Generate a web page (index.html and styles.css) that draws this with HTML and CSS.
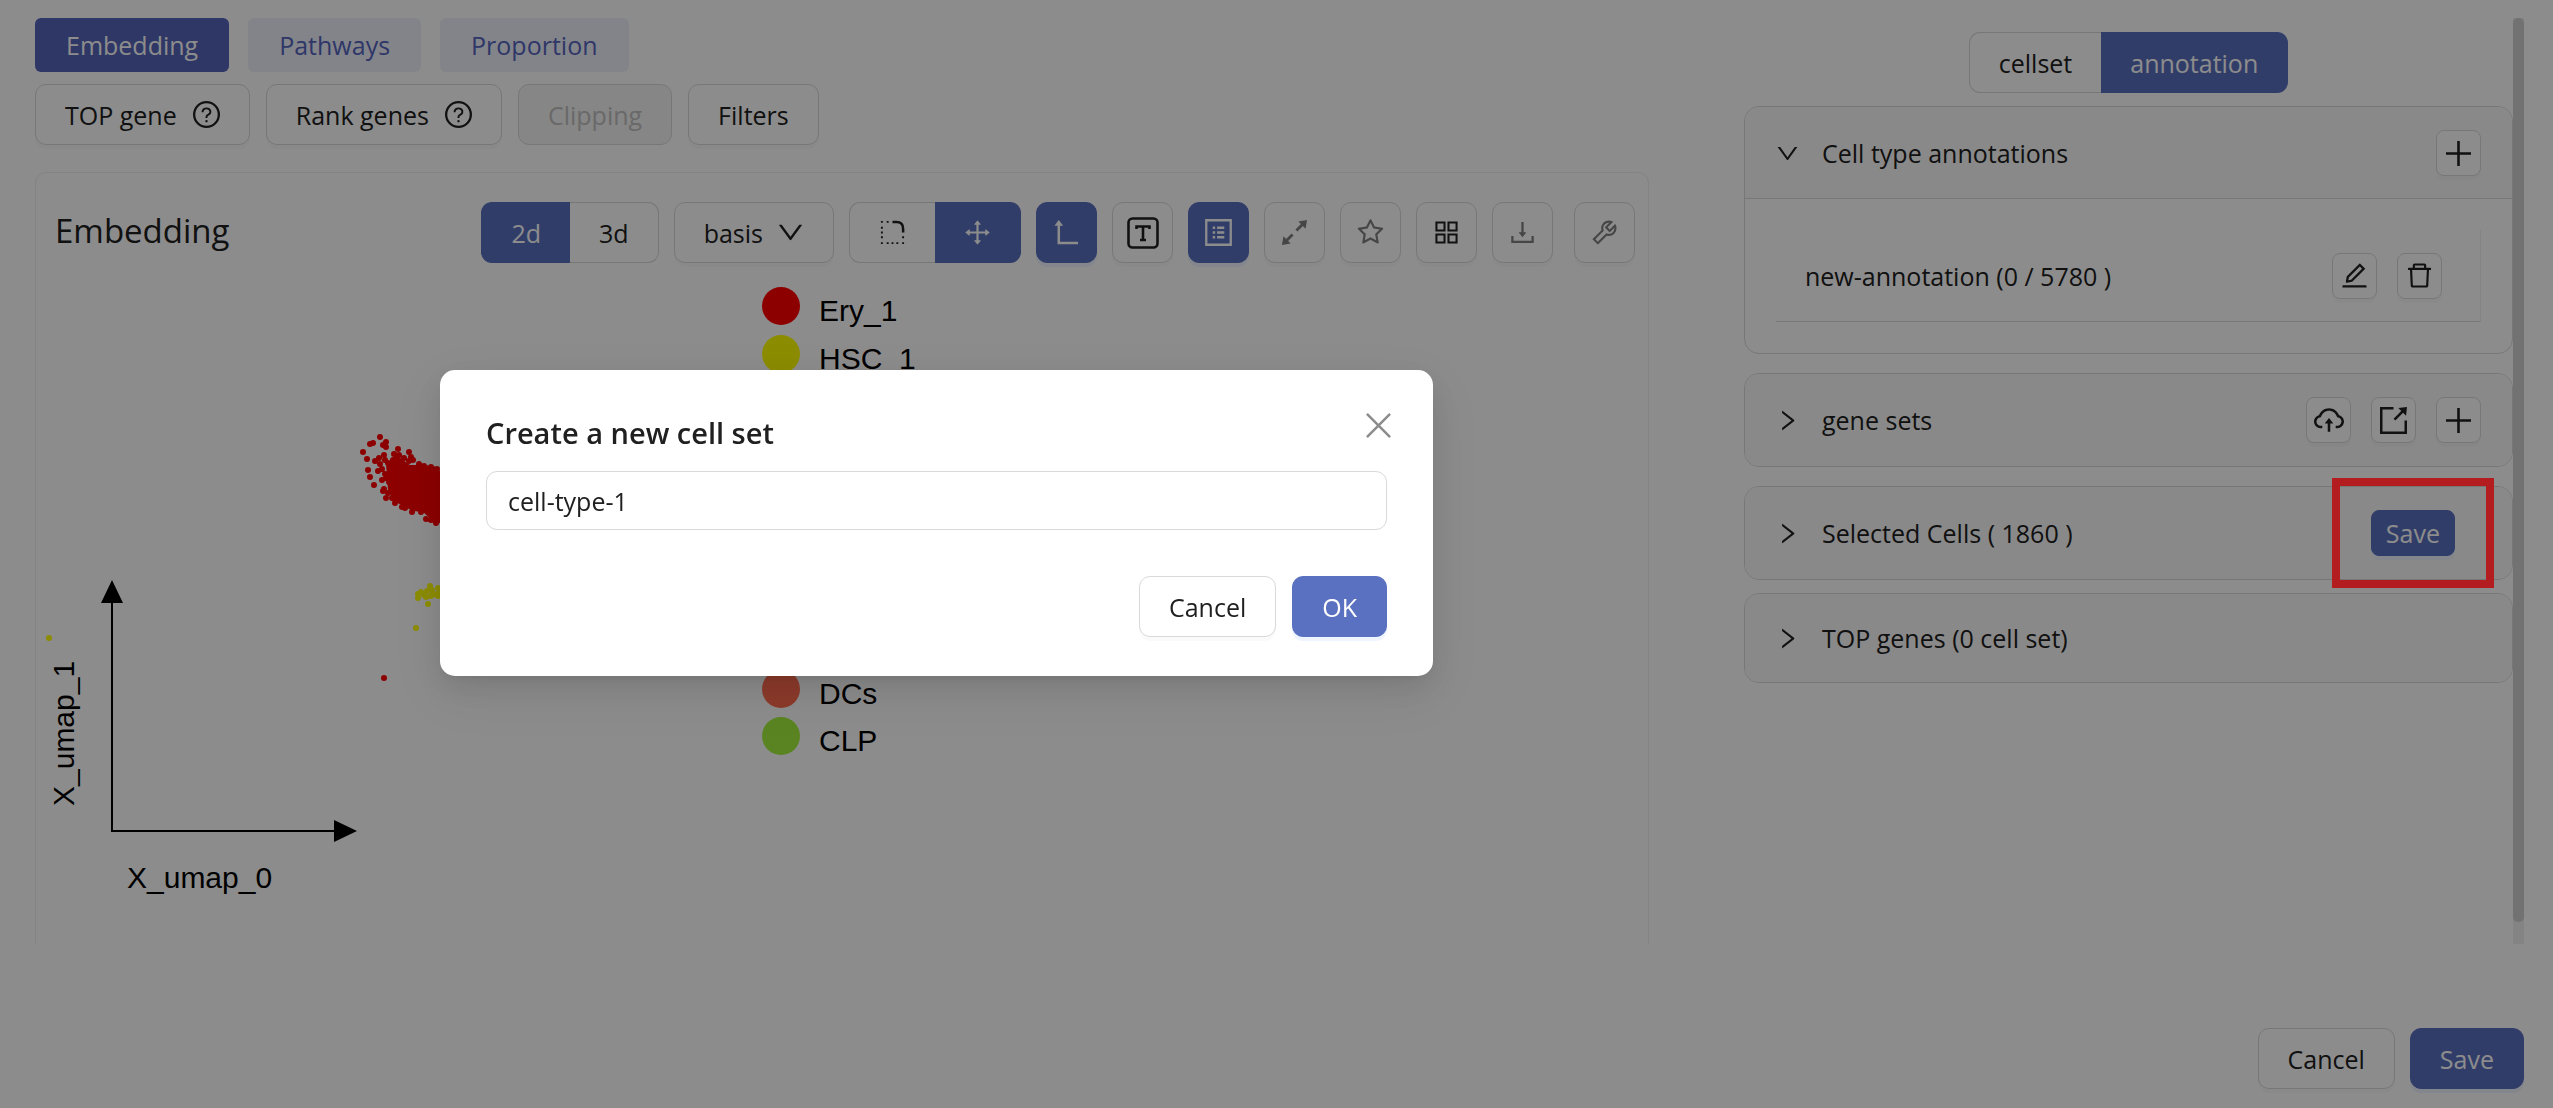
FILE: index.html
```html
<!DOCTYPE html>
<html lang="en">
<head>
<meta charset="utf-8">
<title>Embedding</title>
<link rel="stylesheet" href="styles.css">
</head>
<body>
<svg class="sprite" aria-hidden="true">
  <symbol id="down" viewBox="64 64 896 896"><path d="M884 256h-75c-5.1 0-9.900 2.500-12.900 6.600L512 654.200 227.900 262.600c-3-4.100-7.800-6.600-12.900-6.600h-75c-6.500 0-10.300 7.400-6.500 12.700l352.600 486.100c12.800 17.600 39 17.600 51.700 0l352.600-486.100c3.900-5.300.1-12.700-6.400-12.700z"/></symbol>
  <symbol id="right" viewBox="64 64 896 896"><path d="M765.700 486.800L314.900 134.700A7.970 7.970 0 00302 141v77.300c0 4.900 2.300 9.600 6.100 12.600l360 281.100-360 281.100c-3.900 3-6.100 7.700-6.100 12.600V883c0 6.700 7.700 10.400 12.900 6.300l450.800-352.100a31.960 31.960 0 000-50.400z"/></symbol>
  <symbol id="question" viewBox="64 64 896 896"><circle cx="512" cy="512" r="410" fill="none" stroke="currentColor" stroke-width="76"/><path d="M623.600 316.700C593.600 290.400 554 276 512 276s-81.600 14.500-111.600 40.700C369.200 344 352 380.700 352 420v7.600c0 4.400 3.600 8 8 8h48c4.400 0 8-3.600 8-8V420c0-44.100 43.100-80 96-80s96 35.900 96 80c0 31.100-22 59.600-56.100 72.700-21.200 8.100-39.200 22.300-52.100 40.900-13.100 19-19.900 41.800-19.900 64.900V620c0 4.400 3.600 8 8 8h48c4.400 0 8-3.600 8-8v-22.700a48.300 48.300 0 0130.900-44.800c59-22.700 97.100-74.700 97.100-132.500.1-39.300-17.100-76-48.300-103.300zM472 732a40 40 0 1080 0 40 40 0 10-80 0z"/></symbol>
  <symbol id="edit" viewBox="64 64 896 896"><path d="M257.700 752c2 0 4-.2 6-.5L431.900 722c2-.4 3.900-1.300 5.300-2.800l423.900-423.900a9.960 9.960 0 000-14.100L694.900 114.900c-1.900-1.900-4.400-2.900-7.100-2.900s-5.200 1-7.100 2.900L256.800 538.800c-1.500 1.500-2.400 3.300-2.800 5.300l-29.500 168.200a33.500 33.500 0 009.400 29.800c6.600 6.400 14.900 9.900 23.800 9.900zm67.400-174.400L687.800 215l73.300 73.300-362.700 362.600-88.900 15.700 15.600-89zM880 836H144c-17.700 0-32 14.300-32 32v36c0 4.400 3.600 8 8 8h784c4.400 0 8-3.600 8-8v-36c0-17.700-14.300-32-32-32z"/></symbol>
  <symbol id="trash" viewBox="64 64 896 896"><path d="M360 184h304v72h72v-80c0-35.300-28.700-64-64-64H352c-35.300 0-64 28.700-64 64v80h72v-72zm504 72H160c-17.700 0-32 14.300-32 32v32c0 4.400 3.600 8 8 8h60.400l24.700 523c1.600 34.100 29.800 61 63.900 61h454c34.200 0 62.300-26.800 63.900-61l24.700-523H888c4.400 0 8-3.600 8-8v-32c0-17.700-14.300-32-32-32zM731.300 840H292.700l-24.200-512h487l-24.200 512z"/></symbol>
  <symbol id="drag" viewBox="64 64 896 896"><path d="M909.300 506.300L781.700 405.600a7.230 7.230 0 00-11.700 5.700V476H548V254h64.800c6 0 9.400-7 5.700-11.700L517.700 114.700a7.140 7.140 0 00-11.300 0L405.600 242.300a7.230 7.230 0 005.700 11.700H476v222H254v-64.800c0-6-7-9.400-11.700-5.700L114.700 506.300a7.140 7.140 0 000 11.300l127.500 100.800c4.700 3.700 11.700.4 11.700-5.700V548h222v222h-64.800c-6 0-9.400 7-5.700 11.700l100.800 127.500c2.900 3.700 8.500 3.700 11.300 0l100.800-127.500c3.700-4.700.4-11.700-5.700-11.700H548V548h222v64.800c0 6 7 9.400 11.700 5.700l127.500-100.800a7.300 7.300 0 00.1-11.400z"/></symbol>
  <symbol id="star" viewBox="64 64 896 896"><path d="M908.100 353.100l-253.900-36.900L540.700 86.100c-3.100-6.300-8.200-11.400-14.500-14.500-15.800-7.800-35-1.300-42.900 14.500L369.800 316.200l-253.900 36.900c-7 1-13.400 4.300-18.300 9.300a32.050 32.050 0 00.6 45.300l183.700 179.100-43.400 252.900a31.950 31.950 0 0046.400 33.700L512 754l227.100 119.400c6.200 3.300 13.400 4.400 20.300 3.200 17.400-3 29.100-19.500 26.100-36.900l-43.400-252.900 183.700-179.100c5-4.900 8.300-11.300 9.300-18.300 2.700-17.500-9.500-33.700-27-36.300zM664.800 561.600l36.100 210.300L512 672.700 323.100 772l36.100-210.300-152.800-149L417.600 382 512 190.700 606.400 382l211.200 30.700-152.800 148.900z"/></symbol>
  <symbol id="grid" viewBox="64 64 896 896"><path d="M178 178h268v268H178zM578 178h268v268H578zM178 578h268v268H178zM578 578h268v268H578z" fill="none" stroke="currentColor" stroke-width="68"/></symbol>
  <symbol id="download" viewBox="64 64 896 896"><path d="M505.700 661a8 8 0 0012.600 0l112-141.700c4.100-5.200.4-12.900-6.300-12.900h-74.100V168c0-4.400-3.600-8-8-8h-60c-4.400 0-8 3.600-8 8v338.300H400c-6.700 0-10.400 7.700-6.300 12.900l112 141.800zM878 626h-60c-4.400 0-8 3.600-8 8v154H214V634c0-4.400-3.600-8-8-8h-60c-4.400 0-8 3.600-8 8v198c0 17.700 14.300 32 32 32h684c17.700 0 32-14.300 32-32V634c0-4.400-3.600-8-8-8z"/></symbol>
  <symbol id="tool" viewBox="64 64 896 896"><path d="M876.600 239.500c-.5-.9-1.200-1.800-2-2.500-5-5-13.100-5-18.100 0L684.200 409.300l-67.900-67.900L788.700 169c.8-.8 1.400-1.600 2-2.500 3.600-6.100 1.600-13.900-4.500-17.500-98.200-58-226.800-44.700-311.300 39.700-67 67-89.200 162-66.500 247.400l-293 293c-3 3-2.800 7.900.3 11l169.700 169.700c3.100 3.100 8.100 3.300 11 .3l292.900-292.900c85.500 22.800 180.500.7 247.600-66.400 84.400-84.500 97.700-213.100 39.700-311.300zM786 499.800c-58.100 58.100-145.300 69.300-214.600 33.600l-8.800 8.800-.1-.1-274 274.100-79.200-79.200 230.100-230.100s0 .1.1.1l52.800-52.800c-35.700-69.300-24.500-156.500 33.600-214.600a184.200 184.200 0 01144-53.500L537 318.900a32.050 32.050 0 000 45.300l124.500 124.500a32.050 32.050 0 0045.300 0l132.800-132.800c3.700 51.800-14.400 104.800-53.600 143.900z"/></symbol>
  <symbol id="cloud" viewBox="64 64 896 896"><path d="M518.300 459a8 8 0 00-12.600 0l-112 141.700a7.980 7.980 0 006.300 12.900h73.900V856c0 4.400 3.600 8 8 8h60c4.400 0 8-3.600 8-8V613.700H624c6.700 0 10.400-7.700 6.300-12.900L518.300 459z"/><path d="M811.400 366.700C765.600 245.900 648.900 160 512.200 160S258.800 245.800 213 366.600C127.300 389.100 64 467.200 64 560c0 110.500 89.500 200 199.900 200H304c4.400 0 8-3.600 8-8v-60c0-4.400-3.600-8-8-8h-40.100c-33.700 0-65.400-13.400-89-37.700-23.500-24.200-36-56.800-34.900-90.600.9-26.400 9.900-51.200 26.200-72.100 16.700-21.300 40.100-36.800 66.100-43.700l37.900-9.900 13.900-36.600c8.600-22.800 20.600-44.100 35.700-63.400a245.600 245.600 0 0152.400-49.900c41.100-28.900 89.500-44.200 140-44.200s98.900 15.300 140 44.200c19.900 14 37.500 30.800 52.400 49.900 15.100 19.300 27.100 40.700 35.700 63.400l13.800 36.500 37.800 10C846.100 454.500 884 503.800 884 560c0 33.100-12.900 64.300-36.300 87.700a123.070 123.070 0 01-87.600 36.300H720c-4.400 0-8 3.600-8 8v60c0 4.400 3.600 8 8 8h40.100C870.500 760 960 670.500 960 560c0-92.700-63.100-170.700-148.600-193.300z"/></symbol>
  <symbol id="plus" viewBox="0 0 27 27"><path d="M13.500 1v25M1 13.500h25" fill="none" stroke="currentColor" stroke-width="2.600"/></symbol>
  <symbol id="close" viewBox="0 0 28 28"><path d="M2 2l24 24M26 2L2 26" fill="none" stroke="currentColor" stroke-width="2.600"/></symbol>
  <symbol id="export" viewBox="0 0 28 28"><path d="M14 1.300H1.300v25.400h25.400V14" fill="none" stroke="currentColor" stroke-width="2.600"/><path d="M15 13L24 4" fill="none" stroke="currentColor" stroke-width="2.600"/><path d="M19 1l9-1-1 9z"/></symbol>
  <symbol id="corner" viewBox="0 0 28 28"><path d="M14 3h4q7 0 7 7v4" fill="none" stroke="currentColor" stroke-width="2.600"/><path d="M2 2h2v2H2zM8 2h2v2H8zM2 8h2v2H2zM2 13h2v2H2zM2 18h2v2H2zM2 24h2v2H2zM8 24h2v2H8zM13 24h2v2h-2zM18 24h2v2h-2zM24 24h2v2h-2zM24 18h2v2h-2z"/></symbol>
  <symbol id="axis" viewBox="0 0 28 28"><path d="M6 5v20h20" fill="none" stroke="currentColor" stroke-width="2.600"/><path d="M6 1l4.500 6h-9z"/></symbol>
  <symbol id="text" viewBox="0 0 32 32"><rect x="1.500" y="1.500" width="29" height="29" rx="4" fill="none" stroke="currentColor" stroke-width="2.600"/><path d="M9.500 12V9.500h13V12M16 9.500V23M13 23h6" fill="none" stroke="currentColor" stroke-width="2.600"/></symbol>
  <symbol id="list" viewBox="0 0 28 28"><path d="M1.300 1.300h25.400v25.400H1.300z" fill="none" stroke="currentColor" stroke-width="2.400"/><path d="M8 9h2.500M8 14h2.500M8 19h2.500M12.500 9h7.500M12.500 14h7.500M12.500 19h7.500" fill="none" stroke="currentColor" stroke-width="2.600"/></symbol>
  <symbol id="expand" viewBox="0 0 28 28"><path d="M16 12l7-7M12 16l-7 7" fill="none" stroke="currentColor" stroke-width="3"/><path d="M18 2.500l9-1.500-1.500 9zM10 25.500L1 27l1.500-9z"/></symbol>
</svg>

<main class="workspace">
  <section class="left">
    <nav class="tabs">
      <button class="tab active">Embedding</button>
      <button class="tab">Pathways</button>
      <button class="tab">Proportion</button>
    </nav>
    <div class="actions">
      <button class="btn">TOP gene <svg class="icon"><use href="#question"/></svg></button>
      <button class="btn">Rank genes <svg class="icon"><use href="#question"/></svg></button>
      <button class="btn" disabled>Clipping</button>
      <button class="btn">Filters</button>
    </div>
    <section class="card">
      <header class="card-head">
        <h2>Embedding</h2>
        <div class="toolbar">
          <div class="group"><button class="btn primary">2d</button><button class="btn">3d</button></div>
          <button class="btn">basis <svg class="icon"><use href="#down"/></svg></button>
          <div class="group"><button class="btn" aria-label="Lasso"><svg class="icon"><use href="#corner"/></svg></button><button class="btn primary" aria-label="Move"><svg class="icon"><use href="#drag"/></svg></button></div>
          <button class="btn square primary" aria-label="Axis"><svg class="icon"><use href="#axis"/></svg></button>
          <button class="btn square" aria-label="Labels"><svg class="icon large"><use href="#text"/></svg></button>
          <button class="btn square primary" aria-label="Legend"><svg class="icon"><use href="#list"/></svg></button>
          <button class="btn square muted" aria-label="Expand"><svg class="icon"><use href="#expand"/></svg></button>
          <button class="btn square muted" aria-label="Favourite"><svg class="icon"><use href="#star"/></svg></button>
          <button class="btn square" aria-label="Layout"><svg class="icon"><use href="#grid"/></svg></button>
          <button class="btn square muted" aria-label="Download"><svg class="icon"><use href="#download"/></svg></button>
          <button class="btn square muted settings" aria-label="Settings"><svg class="icon"><use href="#tool"/></svg></button>
        </div>
      </header>
      <svg class="plot" viewBox="36 283 1612 661" preserveAspectRatio="xMinYMin meet">
        <g class="legend">
          <circle cx="781" cy="306" r="19" fill="#f00"/><text x="819" y="321">Ery_1</text>
          <circle cx="781" cy="354" r="19" fill="#ff0"/><text x="819" y="369">HSC_1</text>
          <circle cx="781" cy="689" r="19" fill="#ff6a4d"/><text x="819" y="704">DCs</text>
          <circle cx="781" cy="736" r="19" fill="#a4f03c"/><text x="819" y="751">CLP</text>
        </g>
        <g class="axes">
          <path d="M112 598V831H340" fill="none" stroke="#000" stroke-width="2"/>
          <path d="M112 580l11 23h-22zM357 831l-23-11v22z"/>
          <text x="127" y="888">X_umap_0</text>
          <text transform="translate(74 806) rotate(-90)">X_umap_1</text>
        </g>
        <path class="area" d="M386 464L396 455 410 465 424 465 434 466 442 473V524L433 521 423 512 413 511 403 506 394 501 388 490z"/>
        <path class="dots red" d="M380 437h0M370 444h0M373 443h0M383 445h0M386 442h0M386 447h0M363 452h0M367 459h0M368 470h0M370 477h0M374 485h0M398 449h0M394 454h0M399 455h0M409 452h0M411 457h0M409 461h0M413 460h0M375 461h0M379 458h0M384 455h0M385 460h0M380 464h0M388 463h0M378 471h0M382 469h0M385 474h0M382 480h0M386 478h0M389 482h0M383 491h0M384 489h0M388 493h0M386 498h0M392 498h0M395 503h0M402 507h0M405 508h0M412 512h0M421 512h0M426 519h0M431 520h0M436 523h0M404 458h0M419 464h0M424 466h0M431 467h0M437 469h0M390 470h0M393 460h0M401 463h0M384 678h0"/>
        <path class="dots yellow" d="M418 598h0M418 594h0M421 592h0M424 595h0M427 591h0M430 586h0M431 596h0M434 594h0M432 590h0M438 588h0M438 596h0M426 597h0M439 593h0M428 604h0M416 628h0M49 638h0"/>
      </svg>
    </section>
  </section>

  <aside class="right">
    <div class="group switch"><button class="btn">cellset</button><button class="btn primary">annotation</button></div>
    <section class="panel">
      <header class="panel-head open"><svg class="chevron"><use href="#down"/></svg><h3>Cell type annotations</h3><button class="btn small" aria-label="Add annotation"><svg class="icon"><use href="#plus"/></svg></button></header>
      <div class="panel-body">
        <div class="entry"><span>new-annotation (0 / 5780 )</span><button class="btn small" aria-label="Edit"><svg class="icon"><use href="#edit"/></svg></button><button class="btn small" aria-label="Delete"><svg class="icon"><use href="#trash"/></svg></button></div>
      </div>
    </section>
    <section class="panel"><header class="panel-head"><svg class="chevron"><use href="#right"/></svg><h3>gene sets</h3><button class="btn small" aria-label="Upload"><svg class="icon cloud"><use href="#cloud"/></svg></button><button class="btn small" aria-label="Export"><svg class="icon"><use href="#export"/></svg></button><button class="btn small" aria-label="Add gene set"><svg class="icon"><use href="#plus"/></svg></button></header></section>
    <section class="panel selected"><header class="panel-head"><svg class="chevron"><use href="#right"/></svg><h3>Selected Cells ( 1860 )</h3><button class="btn save primary">Save</button></header><div class="highlight"></div></section>
    <section class="panel"><header class="panel-head"><svg class="chevron"><use href="#right"/></svg><h3>TOP genes (0 cell set)</h3></header></section>
  </aside>
  <div class="scrollbar"><div class="thumb"></div></div>
</main>

<footer class="footer"><button class="btn">Cancel</button><button class="btn primary">Save</button></footer>

<div class="mask">
  <form class="modal" role="dialog" aria-labelledby="dialog-title">
    <header class="modal-head"><label id="dialog-title" for="set-name">Create a new cell set</label><button type="button" class="close" aria-label="Close"><svg class="icon"><use href="#close"/></svg></button></header>
    <input id="set-name" type="text" value="cell-type-1">
    <div class="modal-foot"><button type="button" class="btn">Cancel</button><button type="button" class="btn primary">OK</button></div>
  </form>
</div>
</body>
</html>
```
FILE: styles.css
```css
* { box-sizing: border-box; }
body {
  margin: 0;
  min-height: 100vh;
  padding: 18px 29px 19px 35px;
  display: flex;
  flex-direction: column;
  justify-content: space-between;
  background: #fff;
  color: #202020;
  font: 25px/36px "Segoe UI", "Open Sans", "Noto Sans", sans-serif;
}
h2, h3 { margin: 0; font-weight: 400; }
h2 { font-size: 33px; }
h3 { font-size: 25px; }
svg { display: block; fill: currentColor; }
.sprite { position: absolute; width: 0; height: 0; }
.icon { width: 27px; height: 27px; flex: none; }
.icon.large { width: 32px; height: 32px; }
.icon.cloud { width: 30px; height: 30px; }

.btn {
  height: 61px;
  padding: 0 29px;
  display: inline-flex;
  align-items: center;
  justify-content: center;
  gap: 14px;
  border: 1px solid #d9d9d9;
  border-radius: 11px;
  background: #fff;
  box-shadow: 0 4px 0 rgba(0, 0, 0, .02);
  color: inherit;
  font: inherit;
  white-space: nowrap;
}
.btn:disabled { background: #f5f5f5; color: #bfbfbf; box-shadow: none; }
.btn.primary { border-color: #5a70c0; background: #5a70c0; color: #fff; box-shadow: 0 4px 0 #eff5ff; }
.btn.square { width: 61px; padding: 0; }
.btn.small { width: 45px; height: 46px; padding: 0; border-radius: 8px; }
.btn.muted { color: #808080; }
.group { display: flex; }
.group .btn { box-shadow: none; }
.group .btn:first-child { border-radius: 11px 0 0 11px; border-right: 0; }
.group .btn:last-child { border-radius: 0 11px 11px 0; border-left: 0; }

.workspace {
  height: calc(100vh - 182px);
  display: grid;
  grid-template-columns: minmax(0, 1614fr) minmax(0, 864fr) 11px;
}
.left { display: flex; flex-direction: column; min-height: 0; }
.tabs { display: flex; gap: 19px; }
.tab {
  height: 54px;
  padding: 0 31px;
  border: 0;
  border-radius: 6px;
  background: #eff1fc;
  color: #5565bd;
  font: inherit;
}
.tab.active { background: #5564b9; color: #fff; }
.actions { display: flex; gap: 16px; margin-top: 12px; }
.actions .btn { gap: 16px; }
.card {
  flex: 1;
  min-height: 0;
  margin-top: 27px;
  overflow: hidden;
  border: 1px solid #f0f0f0;
  border-bottom: 0;
  border-radius: 11px 11px 0 0;
}
.card-head { display: flex; justify-content: space-between; align-items: center; padding: 29px 13px 20px 19px; }
.card-head h2 { padding-bottom: 4px; }
.toolbar { display: flex; gap: 15px; }
.settings { margin-left: 6px; }
.plot { width: 100%; height: auto; }
.plot text { fill: #000; font-family: "Liberation Sans", Arial, sans-serif; font-size: 30px; }
.axes { fill: #000; }
.area { fill: #f00; }
.dots { fill: none; stroke-width: 6; stroke-linecap: round; }
.dots.red { stroke: #f00; }
.dots.yellow { stroke: #ff0; }

.right { padding: 14px 0 0 95px; display: flex; flex-direction: column; }
.switch { justify-content: center; margin-bottom: 13px; }
.panel { margin-bottom: 19px; border: 1px solid #d9d9d9; border-radius: 15px; overflow: hidden; }
.panel-head { display: flex; align-items: center; gap: 20px; min-height: 88px; padding: 23px 31px; background: #fafafa; }
.panel-head.open { padding-bottom: 22px; border-bottom: 1px solid #d9d9d9; }
.panel-head h3 { flex: 1; }
.chevron { width: 23px; height: 23px; margin-right: 3px; flex: none; }
.panel-body { padding: 31px; }
.entry { display: flex; align-items: center; gap: 20px; height: 92px; padding: 0 38px 0 29px; border-bottom: 1px solid #d9d9d9; border-right: 1px solid #f0f0f0; }
.entry span { flex: 1; }
.selected { position: relative; overflow: visible; margin-bottom: 13px; }
.selected .panel-head { border-radius: 14px; padding-right: 57px; }
.btn.save { height: 46px; padding: 0 14px; border-radius: 8px; }
.highlight { position: absolute; z-index: 20; top: -9px; right: 18px; width: 162px; height: 110px; border: 8px solid #b41d20; }
.scrollbar { background: #f1f1f1; }
.thumb { height: calc(100% - 22px); border-radius: 5px; background: #d0d0d0; }

.footer { display: flex; justify-content: flex-end; gap: 15px; }

.mask { position: fixed; inset: 0; z-index: 10; padding: 370px 0 0 440px; background: rgba(0, 0, 0, .45); }
.modal {
  width: 993px;
  max-width: 100%;
  padding: 38px 46px 39px;
  border-radius: 15px;
  background: #fff;
  box-shadow: 0 11px 30px rgba(0, 0, 0, .1), 0 6px 12px -8px rgba(0, 0, 0, .12), 0 17px 54px 15px rgba(0, 0, 0, .05);
}
.modal-head { display: flex; justify-content: space-between; font-size: 29px; line-height: 50px; font-weight: 600; }
.close { width: 28px; height: 34px; margin-right: -6px; padding: 0; border: 0; background: none; color: #8c8c8c; display: flex; align-items: center; }
.modal input {
  display: block;
  width: 100%;
  height: 59px;
  margin-top: 13px;
  padding: 0 21px;
  border: 1px solid #d9d9d9;
  border-radius: 11px;
  background: #fff;
  color: inherit;
  font: inherit;
}
.modal-foot { display: flex; justify-content: flex-end; gap: 16px; margin-top: 46px; }
```
